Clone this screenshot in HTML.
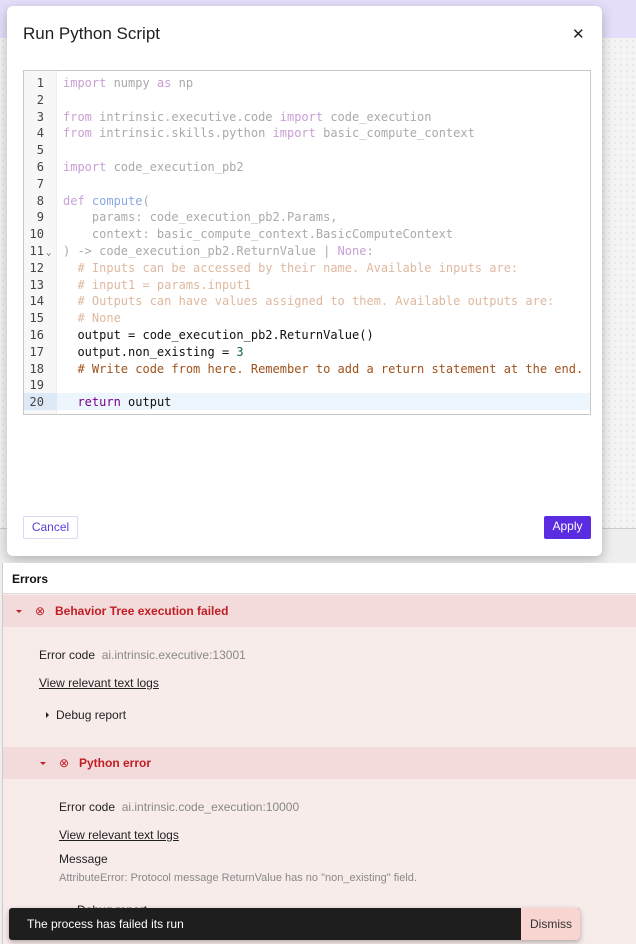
<!DOCTYPE html>
<html><head><style>
*{box-sizing:border-box;margin:0;padding:0}
body{width:636px;height:944px;overflow:hidden;position:relative;font-family:"Liberation Sans",sans-serif;background:#eeeeee}
.top{position:absolute;left:0;top:0;width:636px;height:38px;background:#e5defa}
.dots{position:absolute;left:0;top:38px;width:636px;height:490px;background-color:#f4f4f4;background-image:radial-gradient(#c8c8c8 0.6px,transparent 0.8px);background-size:6px 6px}
.dlg{position:absolute;left:7px;top:6px;width:595px;height:550px;background:#fff;border-radius:6px;box-shadow:0 4px 12px rgba(0,0,0,.25)}
.title{position:absolute;left:16px;top:18px;font-size:17px;color:#1f1f1f}
.x{position:absolute;left:565px;top:19px;font-size:15px;color:#222}
.ed{position:absolute;left:16px;top:64px;width:568px;height:345px;border:1px solid #c8c8c8;background:#fff;overflow:hidden}
.gut{position:absolute;left:0;top:0;width:33px;height:100%;background:#f7f7f7;border-right:1px solid #eee}
.ln{position:absolute;font-family:"DejaVu Sans Mono",monospace;font-size:12px;white-space:pre;line-height:16.8px}
.num{left:0;width:20px;text-align:right;color:#444}
.code{left:39px;color:#aaa}
.k{color:#c9a0d6}.f{color:#8aa8e0}.c{color:#dfb8a0}.b{color:#111}.n{color:#116644}.w{color:#a0521c}.r{color:#770088}
.hl{position:absolute;left:0;top:322px;width:100%;height:17px;background:#eef6fd}
.btn{position:absolute;top:510px;height:23px;font-size:12px;line-height:21px;text-align:center;border-radius:2px}
.err{position:absolute;left:2px;top:563px;width:634px;height:381px;background:#f8eceb;border-left:1px solid #ccc}
.eh{position:absolute;left:0;top:0;width:100%;height:31px;background:#fff;border-bottom:1px solid #ddd;font-size:12px;font-weight:bold;padding:9px 0 0 9px;color:#111}
.hd{position:absolute;left:0;width:100%;height:32px;background:#f3dbdb;color:#c21d24;font-weight:bold;font-size:12px}
.tri{position:absolute;width:0;height:0;border-left:3px solid transparent;border-right:3px solid transparent;border-top:3px solid #c21d24;top:15px}
.t{position:absolute;font-size:12px;color:#1f1f1f;white-space:nowrap}
.g{color:#888}
.u{text-decoration:underline}
.snack{position:absolute;left:9px;top:908px;width:571px;height:32px;background:#1e1e1e;border-radius:3px;overflow:hidden;box-shadow:0 2px 6px rgba(0,0,0,.3)}
</style></head><body>
<div class="top"></div><div class="dots"></div>
<div style="position:absolute;left:0;top:528px;width:636px;height:1px;background:#ccc"></div>
<div class="dlg">
<div class="title">Run Python Script</div>
<div class="x">✕</div>
<div class="ed">
<div class="gut"></div><div class="hl"></div>
<div style="position:absolute;left:0;top:322px;width:33px;height:17px;background:#dde9f7"></div>
<div class="ln num" style="top:4px">1<br>2<br>3<br>4<br>5<br>6<br>7<br>8<br>9<br>10<br>11<br>12<br>13<br>14<br>15<br>16<br>17<br>18<br>19<br>20</div>
<div class="ln" style="left:22px;top:174px;font-size:9px;color:#666">⌄</div>
<div class="ln code" style="top:4px"><span class="k">import</span> numpy <span class="k">as</span> np

<span class="k">from</span> intrinsic.executive.code <span class="k">import</span> code_execution
<span class="k">from</span> intrinsic.skills.python <span class="k">import</span> basic_compute_context

<span class="k">import</span> code_execution_pb2

<span class="k">def</span> <span class="f">compute</span>(
    params: code_execution_pb2.Params,
    context: basic_compute_context.BasicComputeContext
) -&gt; code_execution_pb2.ReturnValue | <span class="k">None</span>:
  <span class="c"># Inputs can be accessed by their name. Available inputs are:</span>
  <span class="c"># input1 = params.input1</span>
  <span class="c"># Outputs can have values assigned to them. Available outputs are:</span>
  <span class="c"># None</span>
  <span class="b">output = code_execution_pb2.ReturnValue()</span>
  <span class="b">output.non_existing = </span><span class="n">3</span>
  <span class="w"># Write code from here. Remember to add a return statement at the end.</span>

  <span class="r">return</span> <span class="b">output</span></div>
</div>
<div class="btn" style="left:16px;width:55px;border:1px solid #ddd8f5;color:#5b3fd6">Cancel</div>
<div class="btn" style="left:537px;width:47px;background:#5a2be0;color:#fff">Apply</div>
</div>
<div class="err">
<div class="eh">Errors</div>
<div class="hd" style="top:32px"><span class="tri" style="left:13px"></span><span style="position:absolute;left:32px;top:9px;font-weight:normal">⊗</span><span style="position:absolute;left:52px;top:9px">Behavior Tree execution failed</span></div>
<div class="t" style="left:36px;top:85px">Error code &nbsp;<span class="g">ai.intrinsic.executive:13001</span></div>
<div class="t u" style="left:36px;top:113px">View relevant text logs</div>
<div style="position:absolute;left:43px;top:149px;width:0;height:0;border-top:3px solid transparent;border-bottom:3px solid transparent;border-left:3px solid #222"></div>
<div class="t" style="left:53px;top:145px">Debug report</div>
<div class="hd" style="top:184px"><span class="tri" style="left:37px"></span><span style="position:absolute;left:56px;top:9px;font-weight:normal">⊗</span><span style="position:absolute;left:76px;top:9px">Python error</span></div>
<div class="t" style="left:56px;top:237px">Error code &nbsp;<span class="g">ai.intrinsic.code_execution:10000</span></div>
<div class="t u" style="left:56px;top:265px">View relevant text logs</div>
<div class="t" style="left:56px;top:289px">Message</div>
<div class="t g" style="left:56px;top:309px;font-size:11px">AttributeError: Protocol message ReturnValue has no "non_existing" field.</div>
<div class="t" style="left:74px;top:340px">Debug report</div>
</div>
<div class="snack"><span style="position:absolute;left:18px;top:9px;font-size:12px;color:#fff">The process has failed its run</span><div style="position:absolute;left:512px;top:0;width:59px;height:32px;background:#f8d5d0;color:#333;font-size:12px;padding:9px 0 0 9px">Dismiss</div></div>
</body></html>
